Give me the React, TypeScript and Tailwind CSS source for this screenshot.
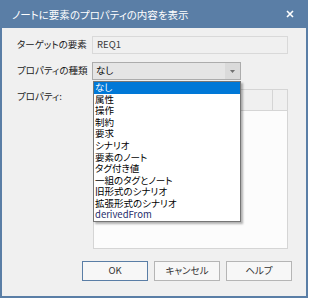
import React from "react";

const jp = "[font-family:'Noto_Sans_CJK_JP','Noto_Sans',sans-serif] [font-feature-settings:'palt']";

const items = [
  "なし",
  "属性",
  "操作",
  "制約",
  "要求",
  "シナリオ",
  "要素のノート",
  "タグ付き値",
  "一組のタグとノート",
  "旧形式のシナリオ",
  "拡張形式のシナリオ",
  "derivedFrom",
];

export default function App() {
  return (
    <div className={`w-[309px] h-[300px] bg-white ${jp}`}>
      <div className="relative w-[308px] h-[298px] border-2 border-[#5a7ea6] bg-[#f0f0f0] flex flex-col">
        <div className="h-[26px] bg-[#5a7ea6] flex items-center justify-between pl-[10px] pr-[12px] text-white">
          <span className="text-[10.5px] leading-none">ノートに要素のプロパティの内容を表示</span>
          <svg width="8" height="8" viewBox="0 0 8 8" className="mb-[3px]">
            <path d="M1 1L7 7M7 1L1 7" stroke="white" strokeWidth="1.6" />
          </svg>
        </div>
        <div className="flex flex-col pt-[8px] pl-[15px] pr-[18px]">
          <div className="flex items-center h-[18px]">
            <div className="w-[75px] text-[9.5px] leading-none text-[#1a1a1a]">ターゲットの要素</div>
            <div className="flex-1 h-[18px] border border-[#d9d9d9] bg-[#f0f0f0] flex items-center pl-[4px] text-[9.5px] leading-none text-[#3a3a3a]">
              REQ1
            </div>
          </div>
          <div className="flex items-center h-[18px] mt-[8px]">
            <div className="w-[75px] text-[9.5px] leading-none text-[#1a1a1a]">プロパティの種類</div>
            <div className="w-[149px] h-[18px] border border-[#acacac] bg-[#e5e5e5] flex items-center">
              <span className="flex-1 pl-[3px] text-[9.5px] leading-none text-black">なし</span>
              <div className="w-[15px] h-full bg-[#dadada] flex items-center justify-center">
                <svg width="5" height="3" viewBox="0 0 5 3">
                  <path d="M0 0H5L2.5 3Z" fill="#707070" />
                </svg>
              </div>
            </div>
          </div>
          <div className="flex mt-[9px]">
            <div className="w-[76px] text-[9.5px] leading-none text-[#1a1a1a] pt-[3px]">プロパティ:</div>
            <div className="flex-1 h-[160px] border border-[#d5d5d5] bg-[#fcfcfc] flex flex-col">
              <div className="h-[21px] flex border-b border-[#d5d5d5] bg-[#f0f0f0]">
                <div className="flex-1 border-r border-[#d5d5d5]"></div>
                <div className="w-[14px]"></div>
              </div>
            </div>
          </div>
        </div>
        <div className="flex justify-end gap-[6px] pr-[14px] mt-[12px]">
          <button className="w-[66px] h-[20px] border border-[#5a7ea6] bg-[#f7f7f7] text-[9.5px] text-[#333] leading-none">
            OK
          </button>
          <button className="w-[66px] h-[20px] border border-[#b5b5b5] bg-[#f7f7f7] text-[9.5px] text-[#333] leading-none">
            キャンセル
          </button>
          <button className="w-[66px] h-[20px] border border-[#b5b5b5] bg-[#f7f7f7] text-[9.5px] text-[#333] leading-none">
            ヘルプ
          </button>
        </div>

        <div className="absolute left-[91px] top-[79px] w-[148px] h-[141px] bg-white border border-[#767676] shadow-[2px_2px_2px_rgba(0,0,0,0.3)] flex flex-col">
          {items.map((t, i) => (
            <div
              key={t}
              className={
                "h-[11.6px] flex items-center pl-[1px] text-[9.5px] leading-none whitespace-nowrap " +
                (i === 0
                  ? "bg-[#0078d7] text-white"
                  : t === "derivedFrom"
                  ? "text-[#1f2d6b]"
                  : "text-black")
              }
            >
              {t}
            </div>
          ))}
        </div>
      </div>
    </div>
  );
}
